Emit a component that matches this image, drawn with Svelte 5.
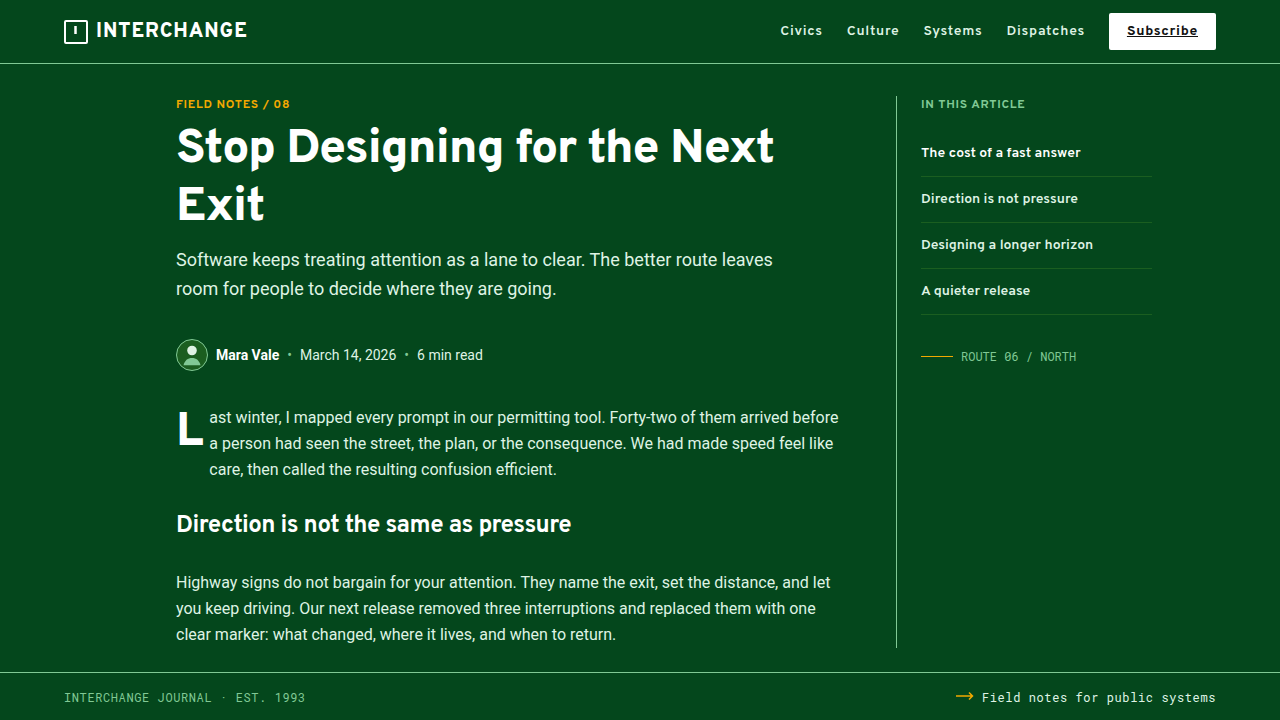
<script>
  const nav = ['Civics', 'Culture', 'Systems', 'Dispatches'];
  const contents = [
    'The cost of a fast answer',
    'Direction is not pressure',
    'Designing a longer horizon',
    'A quieter release'
  ];
</script>

<div class="page">
  <header>
    <a class="brand" href="#home">
      <span class="mark" aria-hidden="true">
        <svg viewBox="0 0 24 24" width="24" height="24">
          <rect x="1" y="1" width="22" height="22" rx="1" fill="none" stroke="#fff" stroke-width="2" />
          <path d="M11.500 6v8" stroke="#fff" stroke-width="2.500" />
        </svg>
      </span>
      <span>INTERCHANGE</span>
    </a>
    <nav aria-label="Primary">
      {#each nav as item}
        <a href="#{item.toLowerCase()}">{item}</a>
      {/each}
      <a class="subscribe" href="#subscribe">Subscribe</a>
    </nav>
  </header>

  <main>
    <article>
      <p class="label eyebrow">FIELD NOTES / 08</p>
      <h1>Stop Designing for the Next Exit</h1>
      <p class="deck">Software keeps treating attention as a lane to clear. The better route leaves room for people to decide where they are going.</p>

      <div class="byline">
        <svg class="avatar" viewBox="0 0 32 32" width="32" height="32" aria-hidden="true">
          <circle cx="16" cy="16" r="15.5" fill="#1b5e20" stroke="#81c995" />
          <circle cx="16" cy="11.5" r="4.8" fill="#dff3e4" />
          <path d="M7.5 26.2c1-4.600 4.400-7.200 8.500-7.200s7.500 2.600 8.500 7.200z" fill="#81c995" />
        </svg>
        <strong>Mara Vale</strong>
        <span class="dot">•</span>
        <time datetime="2026-03-14">March 14, 2026</time>
        <span class="dot">•</span>
        <span>6 min read</span>
      </div>

      <div class="lead">
        <span class="cap">L</span>
        <p>ast winter, I mapped every prompt in our permitting tool. Forty-two of them arrived before a person had seen the street, the plan, or the consequence. We had made speed feel like care, then called the resulting confusion efficient.</p>
      </div>
      <h2>Direction is not the same as pressure</h2>
      <p>Highway signs do not bargain for your attention. They name the exit, set the distance, and let you keep driving. Our next release removed three interruptions and replaced them with one clear marker: what changed, where it lives, and when to return.</p>
    </article>

    <aside>
      <p class="label">IN THIS ARTICLE</p>
      <ul>
        {#each contents as item, i}
          <li><a class:current={i === 0} href="#section-{i + 1}">{item}</a></li>
        {/each}
      </ul>
      <p class="route"><span class="rule"></span>ROUTE 06 / NORTH</p>
    </aside>
  </main>

  <footer>
    <span>INTERCHANGE JOURNAL · EST. 1993</span>
    <span class="tagline">
      <svg viewBox="0 0 18 14" width="18" height="14" aria-hidden="true">
        <path d="M0 6h16.500M13 2.500L16.500 6L13 9.500" fill="none" stroke="#f2a900" stroke-width="1.500" />
      </svg>
      Field notes for public systems
    </span>
  </footer>
</div>

<style>
  :global(body) {
    margin: 0;
    background: #04471c;
  }
  .page {
    --display: Overpass, Roboto, sans-serif;
    --mono: 'Roboto Mono', 'Liberation Mono', monospace;
    --line: #81c995;
    --text: #dff3e4;
    min-height: 100vh;
    display: flex;
    flex-direction: column;
    background: #04471c;
    color: var(--text);
    font-family: Roboto, sans-serif;
    font-size: 16px;
    line-height: 26px;
  }
  p, h1, h2, ul {
    margin: 0;
    padding: 0;
  }
  a {
    color: inherit;
    text-decoration: none;
  }
  header {
    display: flex;
    align-items: center;
    justify-content: space-between;
    padding: 13px 64px;
    border-bottom: 1px solid var(--line);
    font-family: var(--display);
  }
  .brand {
    display: flex;
    align-items: center;
    gap: 8px;
    color: #fff;
    font-size: 20px;
    line-height: 24px;
    font-weight: 800;
    letter-spacing: 0.05em;
  }
  .mark {
    display: flex;
  }
  nav {
    display: flex;
    align-items: center;
    gap: 24px;
    font-size: 14px;
    line-height: 21px;
    font-weight: 600;
    letter-spacing: 0.05em;
  }
  .subscribe {
    padding: 8px 18px;
    border-radius: 2px;
    background: #fff;
    color: #111;
    font-weight: 700;
    text-decoration: underline;
  }
  main {
    flex: 1;
    box-sizing: border-box;
    width: 100%;
    max-width: 1104px;
    margin: 0 auto;
    padding: 32px 40px 24px 88px;
    display: grid;
    grid-template-columns: minmax(0, 1fr) 256px;
    gap: 40px;
  }
  article {
    max-width: 672px;
  }
  .label {
    font-family: var(--display);
    font-size: 12px;
    line-height: 18px;
    font-weight: 700;
    letter-spacing: 0.06em;
    color: var(--line);
  }
  .eyebrow {
    color: #f2a900;
  }
  h1 {
    margin-top: 7px;
    color: #fff;
    font-family: var(--display);
    font-size: 48px;
    line-height: 58px;
    font-weight: 800;
    letter-spacing: -0.02em;
  }
  .deck {
    max-width: 640px;
    margin-top: 8px;
    font-size: 18px;
    line-height: 29px;
  }
  .byline {
    display: flex;
    align-items: center;
    gap: 8px;
    margin: 36px 0 34px;
    font-size: 14px;
    line-height: 30px;
  }
  .byline strong {
    color: #fff;
  }
  .dot {
    color: var(--line);
  }
  .lead {
    display: flex;
    align-items: flex-start;
    gap: 6px;
  }
  .cap {
    color: #fff;
    font-family: var(--display);
    font-size: 48px;
    line-height: 56px;
    font-weight: 800;
  }
  h2 {
    margin: 27px 0;
    color: #fff;
    font-family: var(--display);
    font-size: 24px;
    line-height: 33px;
    font-weight: 700;
    letter-spacing: -0.02em;
  }
  aside {
    padding-left: 24px;
    border-left: 1px solid var(--line);
  }
  ul {
    margin: 17px 0 32px;
    list-style: none;
    font-family: var(--display);
    font-size: 14px;
    line-height: 21px;
    font-weight: 600;
  }
  li {
    border-bottom: 1px solid #1b5e20;
  }
  li a {
    display: block;
    padding: 12px 0;
  }
  .current {
    color: #fff;
  }
  .route {
    display: flex;
    align-items: center;
    gap: 8px;
    color: var(--line);
    font-family: var(--mono);
    font-size: 12px;
    line-height: 18px;
  }
  .rule {
    width: 32px;
    height: 1px;
    background: #f2a900;
  }
  footer {
    display: flex;
    align-items: center;
    justify-content: space-between;
    padding: 11px 64px 10px;
    border-top: 1px solid var(--line);
    color: var(--line);
    font-family: var(--mono);
    font-size: 12px;
    letter-spacing: 0.05em;
  }
  .tagline {
    display: flex;
    align-items: center;
    gap: 8px;
    color: var(--text);
  }
</style>
